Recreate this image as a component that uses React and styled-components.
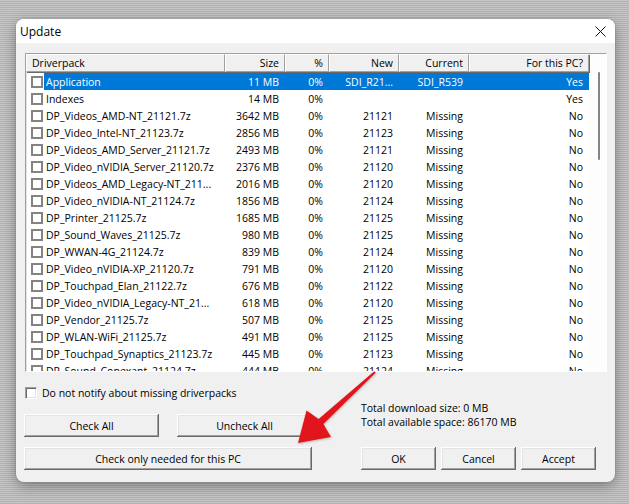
import React from 'react';
import styled, { createGlobalStyle } from 'styled-components';

// --- Global ---
const GlobalStyle = createGlobalStyle`
    html, body {
        margin: 0;
        padding: 0;
    }
    body {
        width: 629px;
        height: 504px;
        overflow: hidden;
        font-family: 'Open Sans', 'Noto Sans', sans-serif;
        background: repeating-linear-gradient(
            to bottom,
            #c6c6c6 0px,
            #c6c6c6 1px,
            #b2b2b2 1px,
            #b2b2b2 2px
        );
    }
`;

// --- Layout ---
const Page = styled.div`
    position: relative;
    width: 629px;
    height: 504px;
    padding: 19px 0 0 16px;
    box-sizing: border-box;
`;

const Window = styled.div`
    width: 599px;
    height: 463px;
    border-radius: 8px;
    overflow: hidden;
    background: #f0f0f0;
    box-shadow: 0 4px 14px rgba(0, 0, 0, 0.35), 0 0 0 1px rgba(0, 0, 0, 0.08);
    display: flex;
    flex-direction: column;
    color: #000;
    font-size: 10.5px;
`;

const TitleBar = styled.div`
    height: 24px;
    flex: none;
    background: #fff;
    display: flex;
    align-items: center;
    justify-content: space-between;
    padding: 0 9px 0 4px;
    font-size: 12px;
`;

const CloseIcon = styled.svg`
    width: 11px;
    height: 11px;
    display: block;
`;

const Body = styled.div`
    flex: 1;
    padding: 10px 8px 0 9px;
    display: flex;
    flex-direction: column;
`;

// --- List ---
const ListBox = styled.div`
    height: 319px;
    width: 582px;
    box-sizing: border-box;
    border-top: 1px solid #a0a0a0;
    border-left: 1px solid #a0a0a0;
    border-right: 1px solid #fff;
    border-bottom: 1px solid #fff;
    box-shadow: inset 1px 1px 0 #e3e3e3;
    background: #fff;
    display: flex;
    overflow: hidden;
`;

const Table = styled.div`
    width: 563px;
    display: flex;
    flex-direction: column;
`;

const COLS = '18px 181px 60px 44px 70px 70px 120px';

const HeaderRow = styled.div`
    display: grid;
    grid-template-columns: 199px 60px 44px 70px 70px 120px;
    height: 18px;
    flex: none;
`;

const HeaderCell = styled.div`
    box-sizing: border-box;
    background: #f0f0f0;
    border-top: 1px solid #fff;
    border-left: 1px solid #fff;
    border-right: 1px solid #a0a0a0;
    border-bottom: 1px solid #a0a0a0;
    box-shadow: 1px 1px 0 #696969;
    display: flex;
    align-items: center;
    justify-content: ${p => (p.$left ? 'flex-start' : 'flex-end')};
    padding: ${p => (p.$left ? '0 0 0 5px' : '0 5px 0 0')};
    white-space: nowrap;
    position: relative;
    z-index: 1;
`;

const Rows = styled.div`
    margin-top: 1px;
    display: flex;
    flex-direction: column;
`;

const Row = styled.div`
    display: grid;
    grid-template-columns: ${COLS};
    height: 17px;
    flex: none;
`;

const Cell = styled.div`
    display: flex;
    align-items: center;
    justify-content: ${p => (p.$left ? 'flex-start' : 'flex-end')};
    padding: ${p => (p.$left ? '0 0 0 2px' : '0 6px 0 0')};
    white-space: nowrap;
    overflow: hidden;
    background: ${p => (p.$selected ? '#0078d7' : 'transparent')};
    color: ${p => (p.$selected ? '#fff' : '#000')};
`;

const CheckCell = styled.div`
    display: flex;
    align-items: center;
    padding-left: 5px;
`;

const Box = styled.span`
    display: inline-block;
    width: 12px;
    height: 12px;
    box-sizing: border-box;
    border: 2px solid #838383;
    background: #fff;
`;

const ScrollTrack = styled.div`
    width: 18px;
    flex: none;
    background: #fdfdfd;
    display: flex;
    justify-content: center;
`;

const Thumb = styled.div`
    width: 2px;
    height: 88px;
    margin-top: 18px;
    margin-left: 1px;
    background: #858585;
    border-radius: 1px;
`;

// --- Bottom area ---
const Bottom = styled.div`
    display: grid;
    grid-template-columns: 288px 1fr;
    column-gap: 48px;
    margin-top: 14px;
`;

const LeftCol = styled.div`
    display: flex;
    flex-direction: column;
    margin-left: -1px;
`;

const RightCol = styled.div`
    display: flex;
    flex-direction: column;
    justify-content: flex-end;
`;

const CheckLine = styled.label`
    display: flex;
    align-items: center;
    gap: 5px;
    height: 13px;
    margin-left: 1px;
`;

const SunkenBox = styled.span`
    display: inline-block;
    width: 12px;
    height: 12px;
    box-sizing: border-box;
    border-top: 1px solid #a0a0a0;
    border-left: 1px solid #a0a0a0;
    border-right: 1px solid #fff;
    border-bottom: 1px solid #fff;
    box-shadow: inset 1px 1px 0 #696969, inset -1px -1px 0 #e3e3e3;
    background: #fff;
`;

const ButtonRow = styled.div`
    display: flex;
    gap: ${p => p.$gap || 6}px;
    margin-top: ${p => p.$top || 0}px;
`;

const Button = styled.button`
    width: ${p => p.$w}px;
    height: 23px;
    box-sizing: border-box;
    margin: 0;
    padding: 0;
    font: inherit;
    color: #000;
    background: #f0f0f0;
    border: none;
    box-shadow:
        inset -1px -1px 0 #696969,
        inset 1px 1px 0 #fff,
        inset -2px -2px 0 #a0a0a0,
        inset 2px 2px 0 #e3e3e3;
    display: flex;
    align-items: center;
    justify-content: center;
`;

const Totals = styled.div`
    line-height: 13.5px;
    margin-bottom: 18px;
`;

const ArrowSvg = styled.svg`
    position: absolute;
    left: 0;
    top: 0;
    width: 629px;
    height: 504px;
    pointer-events: none;
`;

const rows = [
    ['Application', '11 MB', '0%', 'SDI_R21...', 'SDI_R539', 'Yes'],
    ['Indexes', '14 MB', '0%', '', '', 'Yes'],
    ['DP_Videos_AMD-NT_21121.7z', '3642 MB', '0%', '21121', 'Missing', 'No'],
    ['DP_Video_Intel-NT_21123.7z', '2856 MB', '0%', '21123', 'Missing', 'No'],
    ['DP_Videos_AMD_Server_21121.7z', '2493 MB', '0%', '21121', 'Missing', 'No'],
    ['DP_Video_nVIDIA_Server_21120.7z', '2376 MB', '0%', '21120', 'Missing', 'No'],
    ['DP_Videos_AMD_Legacy-NT_211...', '2016 MB', '0%', '21120', 'Missing', 'No'],
    ['DP_Video_nVIDIA-NT_21124.7z', '1856 MB', '0%', '21124', 'Missing', 'No'],
    ['DP_Printer_21125.7z', '1685 MB', '0%', '21125', 'Missing', 'No'],
    ['DP_Sound_Waves_21125.7z', '980 MB', '0%', '21125', 'Missing', 'No'],
    ['DP_WWAN-4G_21124.7z', '839 MB', '0%', '21124', 'Missing', 'No'],
    ['DP_Video_nVIDIA-XP_21120.7z', '791 MB', '0%', '21120', 'Missing', 'No'],
    ['DP_Touchpad_Elan_21122.7z', '676 MB', '0%', '21122', 'Missing', 'No'],
    ['DP_Video_nVIDIA_Legacy-NT_21...', '618 MB', '0%', '21120', 'Missing', 'No'],
    ['DP_Vendor_21125.7z', '507 MB', '0%', '21125', 'Missing', 'No'],
    ['DP_WLAN-WiFi_21125.7z', '491 MB', '0%', '21125', 'Missing', 'No'],
    ['DP_Touchpad_Synaptics_21123.7z', '445 MB', '0%', '21123', 'Missing', 'No'],
    ['DP_Sound_Conexant_21124.7z', '444 MB', '0%', '21124', 'Missing', 'No'],
];

const headers = ['Size', '%', 'New', 'Current', 'For this PC?'];

const App = () => {
    return (
        <Page>
            <GlobalStyle />
            <Window>
                <TitleBar>
                    <span>Update</span>
                    <CloseIcon viewBox="0 0 11 11">
                        <path d="M0.5 0.5 L10.5 10.5 M10.5 0.5 L0.5 10.5" stroke="#111" strokeWidth="1" />
                    </CloseIcon>
                </TitleBar>
                <Body>
                    <ListBox>
                        <Table>
                            <HeaderRow>
                                <HeaderCell $left>Driverpack</HeaderCell>
                                {headers.map(h => (
                                    <HeaderCell key={h}>{h}</HeaderCell>
                                ))}
                            </HeaderRow>
                            <Rows>
                                {rows.map((r, i) => (
                                    <Row key={r[0]}>
                                        <CheckCell>
                                            <Box />
                                        </CheckCell>
                                        {r.map((v, j) => (
                                            <Cell key={j} $left={j === 0} $selected={i === 0}>
                                                {v}
                                            </Cell>
                                        ))}
                                    </Row>
                                ))}
                            </Rows>
                        </Table>
                        <ScrollTrack>
                            <Thumb />
                        </ScrollTrack>
                    </ListBox>

                    <Bottom>
                        <LeftCol>
                            <CheckLine>
                                <SunkenBox />
                                Do not notify about missing driverpacks
                            </CheckLine>
                            <ButtonRow $gap={18} $top={15}>
                                <Button $w={135}>Check All</Button>
                                <Button $w={135}>Uncheck All</Button>
                            </ButtonRow>
                            <ButtonRow $top={10}>
                                <Button $w={288}>Check only needed for this PC</Button>
                            </ButtonRow>
                        </LeftCol>
                        <RightCol>
                            <Totals>
                                Total download size: 0 MB
                                <br />
                                Total available space: 86170 MB
                            </Totals>
                            <ButtonRow $gap={5}>
                                <Button $w={75}>OK</Button>
                                <Button $w={75}>Cancel</Button>
                                <Button $w={75}>Accept</Button>
                            </ButtonRow>
                        </RightCol>
                    </Bottom>
                </Body>
            </Window>

            <ArrowSvg viewBox="0 0 629 504">
                <defs>
                    <filter id="arrowShadow" x="-20%" y="-20%" width="140%" height="140%">
                        <feDropShadow dx="0.5" dy="1" stdDeviation="1" floodColor="#000" floodOpacity="0.25" />
                    </filter>
                </defs>
                <path
                    d="M374.3 371.3 L375.7 372.7 L323.4 424.1 L331 437 L298 443 L306.5 410.5 L318.6 418.9 Z"
                    fill="#e0161b"
                    filter="url(#arrowShadow)"
                />
            </ArrowSvg>
        </Page>
    );
};

export default App;
